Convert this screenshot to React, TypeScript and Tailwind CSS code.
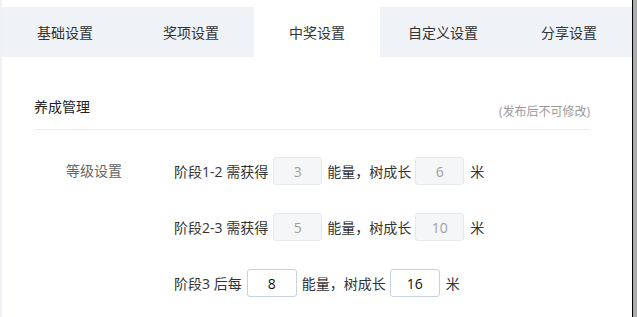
const tabs = ['基础设置', '奖项设置', '中奖设置', '自定义设置', '分享设置']

const stages = [
  { label: '阶段1-2 需获得', energy: '3', height: '6', disabled: true },
  { label: '阶段2-3 需获得', energy: '5', height: '10', disabled: true },
  { label: '阶段3 后每', energy: '8', height: '16', disabled: false },
]

function NumBox({ value, disabled }: { value: string; disabled: boolean }) {
  return (
    <div
      className={
        disabled
          ? 'flex h-7 w-[49px] items-center justify-center rounded-[3px] border border-[#e6e8eb] bg-[#f5f6f7] text-[#a0a0a0]'
          : 'flex h-7 w-[50px] items-center justify-center rounded-[3px] border border-[#c9d1dc] bg-white text-[#111]'
      }
    >
      {value}
    </div>
  )
}

export default function App() {
  return (
    <div
      className="flex h-[317px] w-[637px] overflow-hidden bg-white text-[14px]"
      style={{ fontFamily: '"Open Sans", "Noto Sans CJK SC", sans-serif' }}
    >
      <div className="flex w-[632px] flex-col border-l-2 border-[#eef1f5] bg-white pt-[7px]">
        <div className="flex h-[50px] bg-[#eff2f6]">
          {tabs.map((t, i) => (
            <div
              key={t}
              className={`flex flex-1 items-center justify-center text-[#333] ${i === 2 ? 'bg-white' : ''}`}
            >
              {t}
            </div>
          ))}
        </div>

        <div className="pl-[32px] pr-[42px] pt-[40px]">
          <div className="flex items-start justify-between border-b border-[#e9ebee] pb-[9px]">
            <div className="leading-5 text-[#222]">养成管理</div>
            <div className="pt-[7px] text-[12px] leading-4 text-[#999]">(发布后不可修改)</div>
          </div>

          <div className="flex pt-[27px]">
            <div className="w-[140px] pl-[32px] leading-7 text-[#666]">等级设置</div>
            <div className="flex flex-col gap-7 text-[#333]">
              {stages.map((s) => (
                <div key={s.label} className="flex h-7 items-center">
                  <span className="mr-[5px]">{s.label}</span>
                  <NumBox value={s.energy} disabled={s.disabled} />
                  <span className="ml-[5px] mr-[4px]">能量，树成长</span>
                  <NumBox value={s.height} disabled={s.disabled} />
                  <span className="ml-[6px]">米</span>
                </div>
              ))}
            </div>
          </div>
        </div>
      </div>
      <div className="w-px bg-black" />
      <div className="flex-1 bg-[#ababab]" />
    </div>
  )
}
